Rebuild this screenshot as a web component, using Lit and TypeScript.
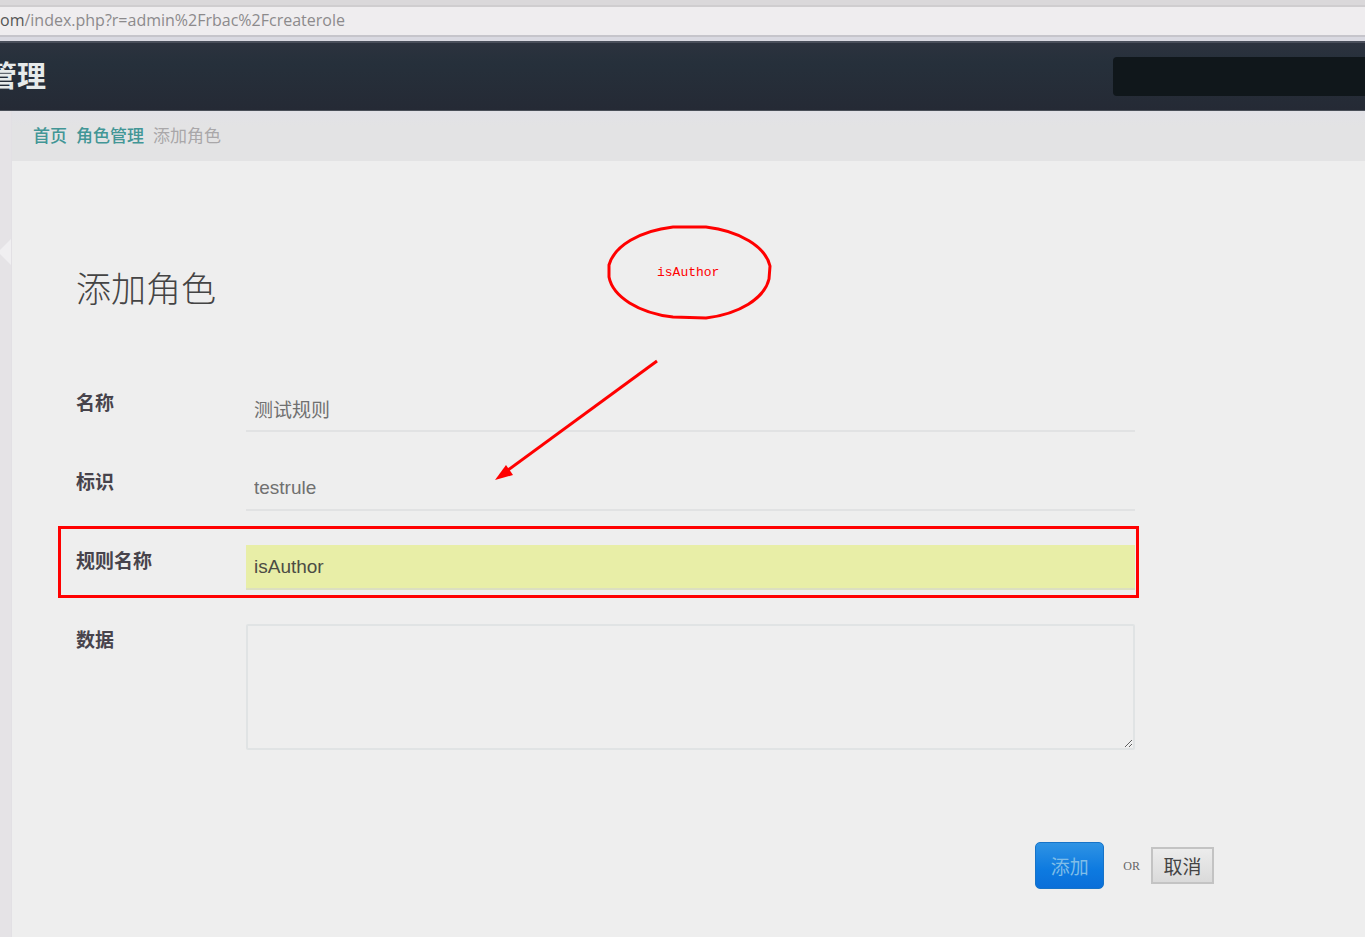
import { LitElement, html, css } from "lit";
import { customElement } from "lit/decorators.js";

@customElement("app-root")
export class AppRoot extends LitElement {
  static styles = css`
    :host {
      display: flex;
      flex-direction: column;
      min-height: 100vh;
      overflow: hidden;
      position: relative;
      background: #eeeeee;
      color: #444;
      font-family: "Liberation Sans", "Noto Sans CJK SC", sans-serif;
      font-size: 19px;
    }
    *,
    *::before,
    *::after {
      box-sizing: border-box;
    }
    .address {
      border-top: 5px solid #dad8da;
      border-bottom: 4px solid #d9d9e1;
    }
    .url {
      height: 32px;
      border-top: 2px solid #cfcdcf;
      border-bottom: 2px solid #c6c5cb;
      background: #efedef;
      font: 16px/26px "Open Sans", sans-serif;
      color: #8c8a8c;
      white-space: nowrap;
    }
    .host {
      color: #555;
      font-weight: 500;
    }
    .navbar {
      display: flex;
      align-items: center;
      justify-content: space-between;
      height: 70px;
      border-top: 2px solid #4a4f5b;
      border-bottom: 1px solid #4a4f58;
      background: linear-gradient(#2c323e, #26303b 30%, #252a35);
    }
    .brand {
      margin: 0 0 0 -12px;
      font-size: 29px;
      line-height: 40px;
      font-weight: 700;
      color: #e6eaea;
    }
    .search {
      width: 252px;
      height: 39px;
      border: 0;
      border-radius: 4px 0 0 4px;
      background: #10171b;
      color: #ccc;
      font: inherit;
    }
    .body {
      flex: 1;
      display: flex;
    }
    .sidebar {
      width: 12px;
      border-right: 1px solid #e2e0e4;
      background: #e5e3e6;
      padding-top: 128px;
    }
    .notch {
      display: block;
      width: 11px;
      height: 26px;
      fill: #f0eff1;
    }
    main {
      flex: 1;
      min-width: 0;
    }
    .crumbs {
      display: flex;
      gap: 9px;
      height: 50px;
      padding: 0 21px;
      background: linear-gradient(#e2e2e7, #e3e3e4 30%);
      font-size: 17px;
      line-height: 52px;
      color: #a9a7a9;
    }
    .crumbs a {
      color: #429696;
      font-weight: 500;
      text-decoration: none;
    }
    .content {
      padding: 103px 151px 48px 64px;
    }
    h1 {
      margin: 0 0 71px;
      font-size: 35px;
      line-height: 52px;
      font-weight: 300;
      color: #444;
    }
    .rows {
      display: grid;
      gap: 34px;
      margin-right: 79px;
    }
    .row {
      display: grid;
      grid-template-columns: 170px 1fr;
      position: relative;
    }
    .row label {
      padding-top: 4px;
      line-height: 26px;
      font-weight: 700;
      color: #47434b;
    }
    .row input {
      width: 100%;
      height: 45px;
      border: 0;
      border-bottom: 2px solid #e1e2e3;
      padding: 0 8px;
      background: transparent;
      color: #707070;
      font: inherit;
    }
    .row textarea {
      display: block;
      width: 100%;
      height: 126px;
      border: 2px solid #e0e3e4;
      border-radius: 2px;
      padding: 8px;
      background: transparent;
      color: #707070;
      font: inherit;
      resize: vertical;
    }
    .row .filled {
      border-bottom-color: #dcdfc0;
      background: #e8eea7;
      color: #4c4c44;
    }
    .marked::after {
      content: "";
      position: absolute;
      inset: -19px -4px -8px -18px;
      border: 3px solid #f00;
      pointer-events: none;
    }
    .actions {
      display: flex;
      align-items: center;
      justify-content: flex-end;
      margin-top: 92px;
    }
    .submit {
      width: 69px;
      height: 47px;
      border: 1px solid #1673c8;
      border-radius: 5px;
      padding: 0;
      background: linear-gradient(#2f93e4, #0d7ae0 60%, #0a6fd9);
      color: #7fbde8;
      font: inherit;
    }
    .or {
      margin: 0 11px 0 19px;
      font: 12px/18px "Liberation Serif", serif;
      color: #666;
    }
    .cancel {
      width: 63px;
      height: 37px;
      border: 2px solid #c3c3c3;
      padding: 0;
      background: linear-gradient(#ececec, #dadada);
      color: #444;
      font: inherit;
    }
    .note {
      position: absolute;
      left: 490px;
      top: 220px;
      width: 290px;
      height: 270px;
      pointer-events: none;
      fill: none;
      stroke: #f00;
      stroke-width: 3;
    }
    .head {
      fill: #f00;
      stroke: none;
    }
    .note text {
      fill: #f00;
      stroke: none;
      font: 13px "Liberation Mono", monospace;
    }
  `;

  render() {
    return html`
      <div class="address">
        <div class="url"><span class="host">om</span>/index.php?r=admin%2Frbac%2Fcreaterole</div>
      </div>
      <header class="navbar">
        <p class="brand">管理</p>
        <input class="search" type="search" aria-label="搜索" />
      </header>
      <div class="body">
        <aside class="sidebar">
          <svg class="notch" viewBox="0 0 11 26"><path d="M11 0V26L0 15V11Z" /></svg>
        </aside>
        <main>
          <nav class="crumbs">
            <a href="#home">首页</a><a href="#roles">角色管理</a><span>添加角色</span>
          </nav>
          <form class="content" @submit=${(e: Event) => e.preventDefault()}>
            <h1>添加角色</h1>
            <div class="rows">
              <div class="row">
                <label for="title">名称</label>
                <input id="title" type="text" .value=${"测试规则"} />
              </div>
              <div class="row">
                <label for="key">标识</label>
                <input id="key" type="text" .value=${"testrule"} />
              </div>
              <div class="row marked">
                <label for="rule">规则名称</label>
                <input id="rule" class="filled" type="text" .value=${"isAuthor"} />
              </div>
              <div class="row">
                <label for="data">数据</label>
                <textarea id="data"></textarea>
              </div>
            </div>
            <div class="actions">
              <button class="submit" type="submit">添加</button>
              <span class="or">OR</span>
              <button class="cancel" type="button">取消</button>
            </div>
          </form>
        </main>
      </div>
      <svg class="note" viewBox="490 220 290 270">
        <path
          d="M673 227H706A81 46 0 0 1 770 266L769 279A81 46 0 0 1 706 318L673 317A81 46 0 0 1 609 277V265A81 46 0 0 1 673 227Z"
        />
        <text x="657" y="276">isAuthor</text>
        <path d="M657 361L508 470" />
        <path class="head" d="M495 480L506 465L513 475Z" />
      </svg>
    `;
  }
}
